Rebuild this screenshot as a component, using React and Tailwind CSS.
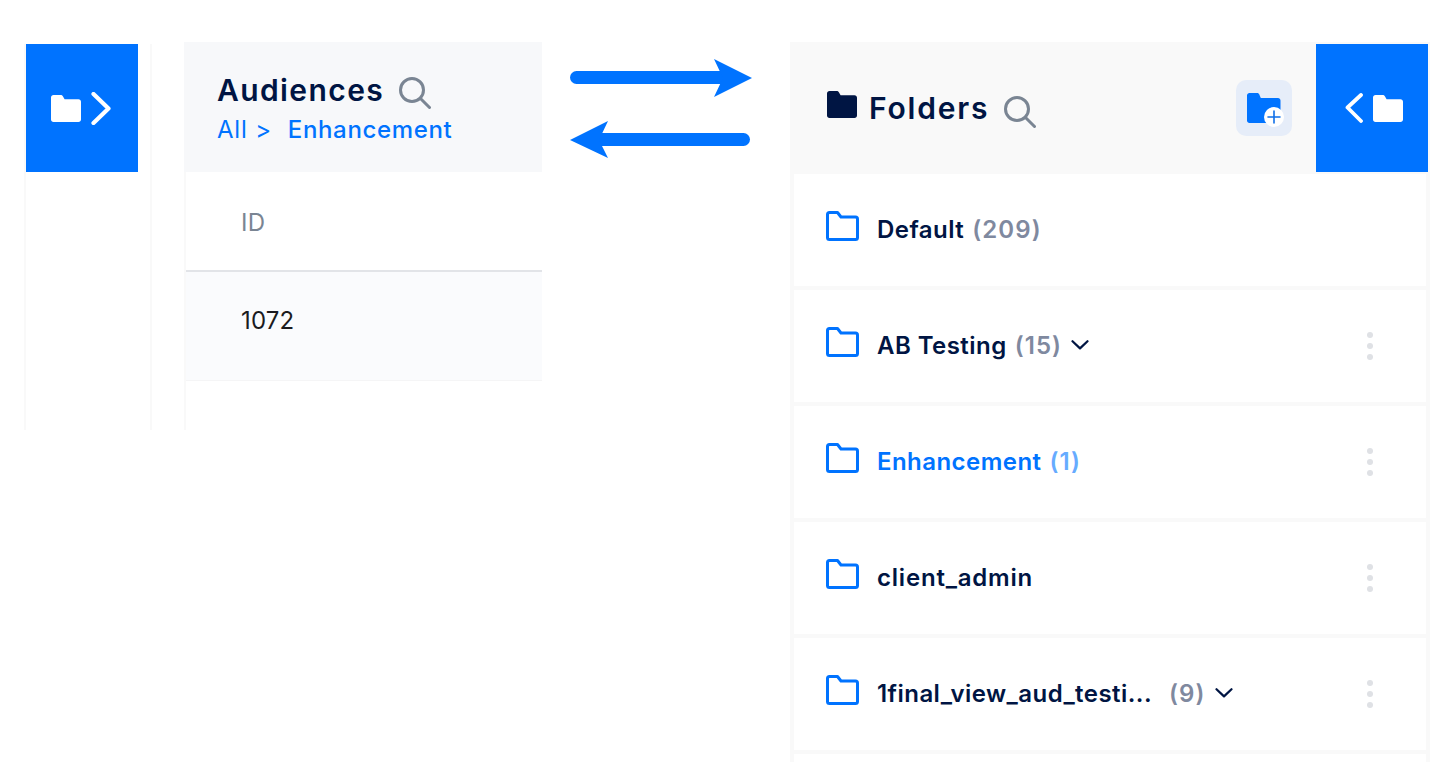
const font = "[font-family:Inter,'Noto_Sans',sans-serif]";

function SolidFolder({ className, fill = "#fff" }) {
  return (
    <svg className={className} viewBox="0 0 30 27" fill={fill}>
      <path d="M2.5 0H9.5C10.6 0 11.4.5 12 1.4L13.6 4.2H27.5C28.9 4.2 30 5.3 30 6.7V24.5C30 25.9 28.9 27 27.5 27H2.5C1.1 27 0 25.9 0 24.5V2.5C0 1.1 1.1 0 2.5 0Z" />
    </svg>
  );
}

function OutlineFolder() {
  return (
    <svg className="w-[33px] h-[30px] shrink-0" viewBox="0 0 33 30" fill="none" stroke="#0073ff" strokeWidth="3" strokeLinejoin="round">
      <path d="M3.5 1.5H11.5L15 6H29.5C30.6 6 31.5 6.9 31.5 8V26.5C31.5 27.6 30.6 28.5 29.5 28.5H3.5C2.4 28.5 1.5 27.6 1.5 26.5V3.5C1.5 2.4 2.4 1.5 3.5 1.5Z" />
    </svg>
  );
}

function Search({ className }) {
  return (
    <svg className={className} viewBox="0 0 32 32" fill="none" stroke="#7a8593" strokeWidth="3" strokeLinecap="round">
      <circle cx="13" cy="13" r="11.5" />
      <path d="M21.5 21.5L30.5 30.5" />
    </svg>
  );
}

function Chevron() {
  return (
    <svg className="w-[18px] h-[10px] shrink-0" viewBox="0 0 18 10" fill="none" stroke="#001543" strokeWidth="2.2" strokeLinecap="round" strokeLinejoin="round">
      <path d="M1.5 1.2L9 8.4L16.5 1.2" />
    </svg>
  );
}

function Dots() {
  return (
    <div className="flex flex-col gap-[5px] ml-auto mr-[53px]">
      <span className="block w-[6px] h-[6px] rounded-full bg-[#dfe1e5]" />
      <span className="block w-[6px] h-[6px] rounded-full bg-[#dfe1e5]" />
      <span className="block w-[6px] h-[6px] rounded-full bg-[#dfe1e5]" />
    </div>
  );
}

function Row({ name, count, chevron, menu, active, wideGap, nameTracking = "tracking-[0.45px]" }) {
  return (
    <div className="h-[112px] shrink-0 bg-white flex items-center pl-[32px]">
      <div className="-mt-[8px]"><OutlineFolder /></div>
      <span className={`ml-[18px] text-[24px] leading-[30px] font-semibold whitespace-nowrap ${nameTracking} ${active ? "text-[#0073ff]" : "text-[#001543]"}`}>{name}</span>
      {count && <span className={`${wideGap ? "ml-[17px]" : "ml-[8px]"} text-[24px] leading-[30px] font-semibold tracking-[1.1px] whitespace-nowrap ${active ? "text-[#66abff]" : "text-[#7f899f]"}`}>{count}</span>}
      {chevron && <div className="ml-[9px] -mt-[2px]"><Chevron /></div>}
      {menu && <Dots />}
    </div>
  );
}

export default function App() {
  return (
    <div className={`w-[1440px] h-[762px] overflow-hidden bg-white flex items-start pl-[24px] pt-[42px] ${font}`}>
      {/* collapsed left rail */}
      <div className="mt-[2px] w-[128px] h-[386px] shrink-0 border-x-2 border-[#f9f9f9]">
        <div className="w-[112px] h-[128px] bg-[#0073ff] flex items-center pl-[25px] gap-[10px]">
          <SolidFolder className="w-[30px] h-[27px]" />
          <svg className="w-[20px] h-[33px]" viewBox="0 0 20 33" fill="none" stroke="#fff" strokeWidth="4.2" strokeLinecap="round" strokeLinejoin="round">
            <path d="M2.5 2L17.5 16.5L2.5 31" />
          </svg>
        </div>
      </div>

      {/* audiences */}
      <div className="ml-[32px] w-[358px] h-[388px] shrink-0 border-l-2 border-[#f9f9f9]">
        <div className="-ml-[2px] h-[130px] bg-[#f7f8fa] pl-[33px] pt-[29px]">
          <div className="flex items-center">
            <span className="text-[30px] leading-[32px] font-semibold tracking-[1.4px] text-[#001543]">Audiences</span>
            <Search className="ml-[15px] mt-[6px] w-[32px] h-[32px]" />
          </div>
          <div className="flex text-[24px] leading-[30px] text-[#0073ff] mt-[6px]">
            <span className="tracking-[0.8px]">All &gt;</span>
            <span className="ml-[16px] font-medium tracking-[0.65px]">Enhancement</span>
          </div>
        </div>
        <div className="h-[100px] border-b-2 border-[#e2e4e8] pl-[55px] pt-[3px] flex items-center text-[24px] tracking-[0.3px] text-[#7a8593]">ID</div>
        <div className="h-[109px] bg-[#fafbfd] border-b border-[#f5f5f6] pl-[55px] pb-[11px] flex items-center text-[24px] tracking-[0.2px] text-[#1b1b1f]">1072</div>
      </div>

      {/* arrows */}
      <svg className="ml-[28px] mt-[16px] w-[182px] h-[102px] shrink-0" viewBox="0 0 182 102" fill="#0073ff">
        <rect x="0" y="13" width="160" height="13" rx="6.5" />
        <path d="M144 1L182 20L144 39L153 20Z" />
        <rect x="20" y="75" width="160" height="13" rx="6.5" />
        <path d="M38 63L0 82L38 100L29 82Z" />
      </svg>

      {/* folders */}
      <div className="ml-[38px] w-[640px] h-[720px] shrink-0 bg-[#f9f9f9] overflow-hidden">
        <div className="h-[132px] flex">
          <div className="w-[526px] flex items-center pl-[37px] pr-[24px]">
            <SolidFolder className="w-[30px] h-[27px] -mt-[8px]" fill="#001543" />
            <span className="ml-[12px] text-[30px] leading-[36px] font-semibold tracking-[1.8px] text-[#001543]">Folders</span>
            <Search className="ml-[15px] mt-[7px] w-[32px] h-[32px]" />
            <div className="ml-auto w-[56px] h-[56px] rounded-[10px] bg-[#e6edf9] flex items-center justify-center">
              <svg className="w-[37px] h-[34px] ml-[3px] mt-[3px]" viewBox="0 0 37 34">
                <path fill="#0073ff" d="M2.5 0H10C11 0 11.7.5 12.2 1.3L13.8 5H31C32.4 5 33.5 6.1 33.5 7.5V27.5C33.5 28.9 32.4 30 31 30H2.5C1.1 30 0 28.9 0 27.5V2.5C0 1.1 1.1 0 2.5 0Z" />
                <circle cx="27" cy="24" r="10" fill="#fff" />
                <path d="M27 18V30M21 24H33" stroke="#0f6fe8" strokeWidth="1.6" strokeLinecap="round" />
              </svg>
            </div>
          </div>
          <div className="mt-[2px] w-[112px] h-[128px] shrink-0 bg-[#0073ff] flex items-center pl-[29px] gap-[10px]">
            <svg className="w-[18px] h-[30px]" viewBox="0 0 18 30" fill="none" stroke="#fff" strokeWidth="3.8" strokeLinecap="round" strokeLinejoin="round">
              <path d="M16 2L2.5 14.5L16 28" />
            </svg>
            <SolidFolder className="w-[30px] h-[27px]" />
          </div>
        </div>
        <div className="ml-[4px] w-[632px] flex flex-col gap-[4px]">
          <Row name="Default" count="(209)" />
          <Row name="AB Testing" count="(15)" chevron menu />
          <Row name="Enhancement" count="(1)" menu active />
          <Row name="client_admin" menu nameTracking="tracking-[0.8px]" />
          <Row name="1final_view_aud_testi..." count="(9)" chevron menu wideGap />
          <div className="h-[20px] bg-white" />
        </div>
      </div>
    </div>
  );
}
